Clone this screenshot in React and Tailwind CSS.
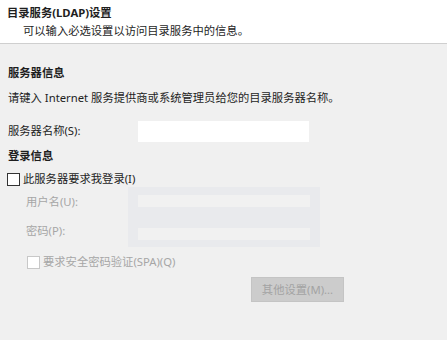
import React from "react";

function Checkbox({ disabled }) {
  return (
    <span
      className={
        "inline-block w-[13px] h-[13px] bg-white border shrink-0 " +
        (disabled ? "border-[#c8c8c8]" : "border-[#333333]")
      }
    ></span>
  );
}

export default function App() {
  return (
    <div
      className="w-[447px] h-[340px] overflow-hidden bg-[#f0f0f0] text-[#1e1e1e] text-[11.3px] leading-[18px]"
      style={{ fontFamily: '"Noto Sans", "Noto Sans CJK SC", sans-serif' }}
    >
      {/* header */}
      <div className="h-[44px] bg-white border-b border-[#cfcfcf] pt-[4px]">
        <div className="pl-[7px] font-bold">目录服务(LDAP)设置</div>
        <div className="pl-[23px]">可以输入必选设置以访问目录服务中的信息。</div>
      </div>

      <div className="px-[8px]">
        <div className="mt-[20px] font-bold">服务器信息</div>
        <div className="mt-[7px]">
          请键入 Internet 服务提供商或系统管理员给您的目录服务器名称。
        </div>

        <div className="mt-[14px] flex items-start">
          <div className="w-[130px] pt-[1px]">服务器名称(S):</div>
          <div className="w-[171px] h-[21px] bg-white"></div>
        </div>

        <div className="mt-[5px] font-bold">登录信息</div>
        <div className="mt-[6px] h-[16px] flex items-center gap-[3px] -ml-[1px]">
          <Checkbox />
          <span>此服务器要求我登录(I)</span>
        </div>

        {/* disabled credentials */}
        <div className="flex">
          <div className="w-[120px] pl-[18px] pt-[6px] flex flex-col gap-[11px] text-[#a6a6a6]">
            <span>用户名(U):</span>
            <span>密码(P):</span>
          </div>
          <div className="w-[192px] bg-[#e9eaed] px-[10px] pt-[8px] pb-[7px] flex flex-col gap-[21px]">
            <div className="h-[12px] bg-[#f1f1f1]"></div>
            <div className="h-[12px] bg-[#f1f1f1]"></div>
          </div>
        </div>

        <div className="mt-[7px] h-[16px] pl-[19px] flex items-center gap-[3px] text-[#a6a6a6]">
          <Checkbox disabled />
          <span>要求安全密码验证(SPA)(Q)</span>
        </div>

        <button className="mt-[7px] ml-[243px] w-[93px] h-[25px] bg-[#cccccc] border border-[#c4c4c4] text-[#a3a3a3] flex items-center justify-center">
          其他设置(M)...
        </button>
      </div>
    </div>
  );
}
